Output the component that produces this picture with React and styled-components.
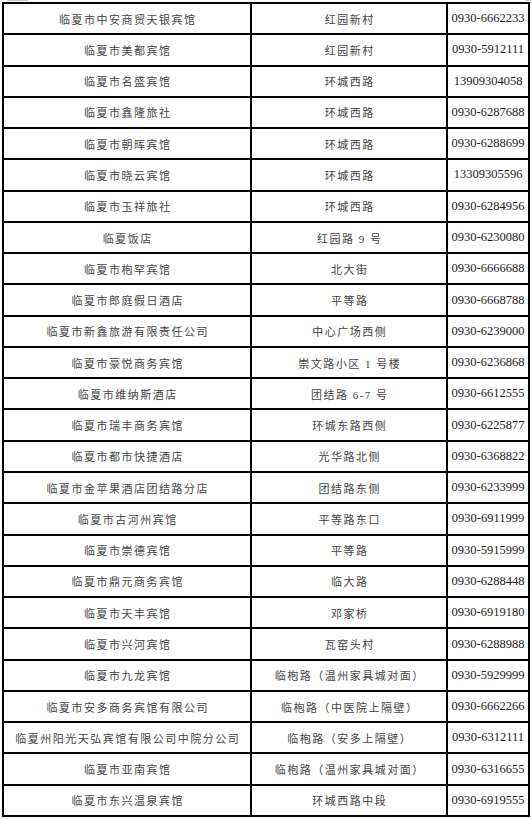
import React from "react";
import styled, { createGlobalStyle } from "styled-components";

const Global = createGlobalStyle`
  html, body { margin: 0; padding: 0; background: #fff; }
  * { box-sizing: border-box; }
`;

const Page = styled.div`
  position: relative;
  padding: 2px 0 0 2px;
  width: 532px;
  height: 819px;

  &::before {
    content: "";
    position: absolute;
    left: 7px;
    top: 0;
    width: 21px;
    height: 1px;
    background: #c8c8c8;
  }

  &::after {
    content: "";
    position: absolute;
    right: 1px;
    top: 0;
    width: 5px;
    height: 3px;
    border-top: 1px solid #c8c8c8;
    border-right: 1px solid #c8c8c8;
  }
`;

const Grid = styled.div`
  display: grid;
  grid-template-columns: 246px 194px 80px;
  grid-template-rows: repeat(26, 1fr);
  gap: 2px;
  padding: 2px;
  width: 528px;
  height: 815px;
  background: #000;
`;

const Cell = styled.div`
  background: #fff;
  display: flex;
  align-items: center;
  justify-content: center;
  white-space: nowrap;
  overflow: hidden;
  font-family: ${(p) =>
    p.$num
      ? '"Liberation Serif", serif'
      : '"Liberation Serif", "Noto Sans CJK SC", serif'};
  font-size: ${(p) => (p.$num ? "12.5px" : "11px")};
  letter-spacing: ${(p) => (p.$num ? "0" : "1.5px")};
  color: ${(p) => (p.$num ? "#1c1c1c" : "#444")};
  padding-left: ${(p) => (p.$num ? "0" : "1.5px")};
`;

const rows = [
  ["临夏市中安商贸天银宾馆", "红园新村", "0930-6662233"],
  ["临夏市美都宾馆", "红园新村", "0930-5912111"],
  ["临夏市名盛宾馆", "环城西路", "13909304058"],
  ["临夏市鑫隆旅社", "环城西路", "0930-6287688"],
  ["临夏市朝晖宾馆", "环城西路", "0930-6288699"],
  ["临夏市晓云宾馆", "环城西路", "13309305596"],
  ["临夏市玉祥旅社", "环城西路", "0930-6284956"],
  ["临夏饭店", "红园路 9 号", "0930-6230080"],
  ["临夏市枹罕宾馆", "北大街", "0930-6666688"],
  ["临夏市郎庭假日酒店", "平等路", "0930-6668788"],
  ["临夏市新鑫旅游有限责任公司", "中心广场西侧", "0930-6239000"],
  ["临夏市豪悦商务宾馆", "崇文路小区 1 号楼", "0930-6236868"],
  ["临夏市维纳斯酒店", "团结路 6-7 号", "0930-6612555"],
  ["临夏市瑞丰商务宾馆", "环城东路西侧", "0930-6225877"],
  ["临夏市都市快捷酒店", "光华路北侧", "0930-6368822"],
  ["临夏市金苹果酒店团结路分店", "团结路东侧", "0930-6233999"],
  ["临夏市古河州宾馆", "平等路东口", "0930-6911999"],
  ["临夏市崇德宾馆", "平等路", "0930-5915999"],
  ["临夏市鼎元商务宾馆", "临大路", "0930-6288448"],
  ["临夏市天丰宾馆", "邓家桥", "0930-6919180"],
  ["临夏市兴河宾馆", "瓦窑头村", "0930-6288988"],
  ["临夏市九龙宾馆", "临枹路（温州家具城对面）", "0930-5929999"],
  ["临夏市安多商务宾馆有限公司", "临枹路（中医院上隔壁）", "0930-6662266"],
  ["临夏州阳光天弘宾馆有限公司中院分公司", "临枹路（安多上隔壁）", "0930-6312111"],
  ["临夏市亚南宾馆", "临枹路（温州家具城对面）", "0930-6316655"],
  ["临夏市东兴温泉宾馆", "环城西路中段", "0930-6919555"],
];

export default function App() {
  return (
    <>
      <Global />
      <Page>
        <Grid>
          {rows.map((r, i) => (
            <React.Fragment key={i}>
              <Cell>{r[0]}</Cell>
              <Cell>{r[1]}</Cell>
              <Cell $num>{r[2]}</Cell>
            </React.Fragment>
          ))}
        </Grid>
      </Page>
    </>
  );
}
